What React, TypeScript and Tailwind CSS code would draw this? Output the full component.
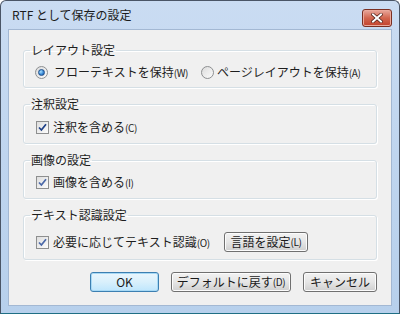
import React from 'react';

const font = { fontFamily: '"Noto Sans CJK JP", "Noto Sans", sans-serif' };

function Radio({ checked }: { checked?: boolean }) {
  return (
    <span className="flex h-[13px] w-[13px] shrink-0 items-center justify-center rounded-full border border-[#8d8f91] bg-gradient-to-br from-[#dcdcdc] to-[#fbfbfb]">
      {checked && (
        <span className="h-[7px] w-[7px] rounded-full border border-[#1f4f8b] bg-[radial-gradient(circle_at_35%_35%,#a9e0ff,#3a8ad6_55%,#1b4f9a)]" />
      )}
    </span>
  );
}

function Checkbox({ dark }: { dark?: boolean }) {
  return (
    <span className="flex h-[13px] w-[13px] shrink-0 items-center justify-center border border-[#8e8f8f] bg-gradient-to-br from-[#dedede] to-[#fcfcfc]">
      <svg width="9" height="9" viewBox="0 0 9 9">
        <path
          d="M1 4.5 L3.4 7 L8 1.2"
          fill="none"
          stroke={dark ? '#1d3f86' : '#4b68a8'}
          strokeWidth="1.7"
        />
      </svg>
    </span>
  );
}

// mnemonic like (W) is drawn narrow in the original
function Key({ k }: { k: string }) {
  return <span className="text-[10px] tracking-[-0.4px]">({k})</span>;
}

function Button({ children, width, primary }: { children: React.ReactNode; width: string; primary?: boolean }) {
  return (
    <button
      type="button"
      className={`flex h-[20px] items-center justify-center rounded-[3px] border text-[12px] leading-none text-[#1a1a1a] ${width} ${
        primary
          ? 'border-[#3c7fb1] bg-gradient-to-b from-[#eaf6fd] via-[#d9f0fc] to-[#bee6fd] shadow-[inset_0_0_0_1px_#a7d9f5]'
          : 'border-[#707070] bg-gradient-to-b from-[#f2f2f2] via-[#e6e6e6] to-[#cfcfcf] shadow-[inset_0_0_0_1px_#fcfcfc]'
      }`}
    >
      {children}
    </button>
  );
}

function Group({ title, children, className }: { title: string; children: React.ReactNode; className: string }) {
  return (
    <fieldset className={`mx-[14px] rounded-[3px] border border-[#d5dfe5] shadow-[inset_1px_1px_0_#fff,1px_1px_0_#fff] ${className}`}>
      <legend className="ml-[6px] px-[1px] text-[12px] leading-[16px] text-[#1e1e1e]">{title}</legend>
      {children}
    </fieldset>
  );
}

export default function App() {
  return (
    <div className="h-[314px] w-[400px] bg-white" style={font}>
      <div className="flex h-[314px] w-[400px] flex-col rounded-t-[6px] border border-[#4a5566] border-b-[#1f6f84] bg-gradient-to-b from-[#cadcf2] via-[#bfd5ef] to-[#b7d0ec] px-[7px] pb-[7px]">
        {/* Title bar */}
        <div className="flex h-[28px] shrink-0 items-start justify-between">
          <span className="pl-[4px] pt-[7px] text-[12px] leading-[14px] text-[#1b1b1b]">RTF として保存の設定</span>
          <div className="mt-[8px] flex h-[18px] w-[30px] items-center justify-center rounded-[3px] border border-[#7a2f22] bg-gradient-to-b from-[#e8a99e] via-[#d2664f] to-[#c2412b] shadow-[inset_0_0_0_1px_#eba99b]">
            <svg width="12" height="10" viewBox="0 0 12 10">
              <path d="M2 1.5 L10 8.5 M10 1.5 L2 8.5" stroke="#4a1a12" strokeWidth="3.4" strokeLinecap="square" />
              <path d="M2 1.5 L10 8.5 M10 1.5 L2 8.5" stroke="#ffffff" strokeWidth="2" strokeLinecap="square" />
            </svg>
          </div>
        </div>

        {/* Client area */}
        <div className="flex h-[277px] flex-col border border-[#a3b8d3] bg-[#f0f0f0] pt-[12px]">
          <Group title="レイアウト設定" className="pb-[7px] pt-[6px]">
            <div className="flex h-[16px] items-center pl-[11px] text-[12px] leading-[16px] text-[#1e1e1e]">
              <div className="flex w-[166px] items-center gap-[6px]">
                <Radio checked />
                <span>フローテキストを保持<Key k="W" /></span>
              </div>
              <div className="flex items-center gap-[3px]">
                <Radio />
                <span>ページレイアウトを保持<Key k="A" /></span>
              </div>
            </div>
          </Group>

          <Group title="注釈設定" className="mt-[8px] pb-[8px] pt-[7px]">
            <div className="flex h-[16px] items-center gap-[4px] pl-[12px] text-[12px] leading-[16px] text-[#1e1e1e]">
              <Checkbox dark />
              <span>注釈を含める<Key k="C" /></span>
            </div>
          </Group>

          <Group title="画像の設定" className="mt-[8px] pb-[8px] pt-[6px]">
            <div className="flex h-[16px] items-center gap-[4px] pl-[12px] text-[12px] leading-[16px] text-[#1e1e1e]">
              <Checkbox />
              <span>画像を含める<Key k="I" /></span>
            </div>
          </Group>

          <Group title="テキスト認識設定" className="mt-[8px] pb-[7px] pt-[9px]">
            <div className="flex h-[20px] items-center pl-[12px] text-[12px] leading-[16px] text-[#1e1e1e]">
              <div className="flex w-[188px] items-center gap-[4px]">
                <Checkbox />
                <span>必要に応じてテキスト認識<Key k="O" /></span>
              </div>
              <Button width="w-[84px]">言語を設定<Key k="L" /></Button>
            </div>
          </Group>

          <div className="mt-[12px] flex justify-end gap-[12px] pr-[14px]">
            <Button width="w-[69px]" primary>
              OK
            </Button>
            <Button width="w-[120px]">デフォルトに戻す<Key k="D" /></Button>
            <Button width="w-[74px]">キャンセル</Button>
          </div>
        </div>
      </div>
    </div>
  );
}
